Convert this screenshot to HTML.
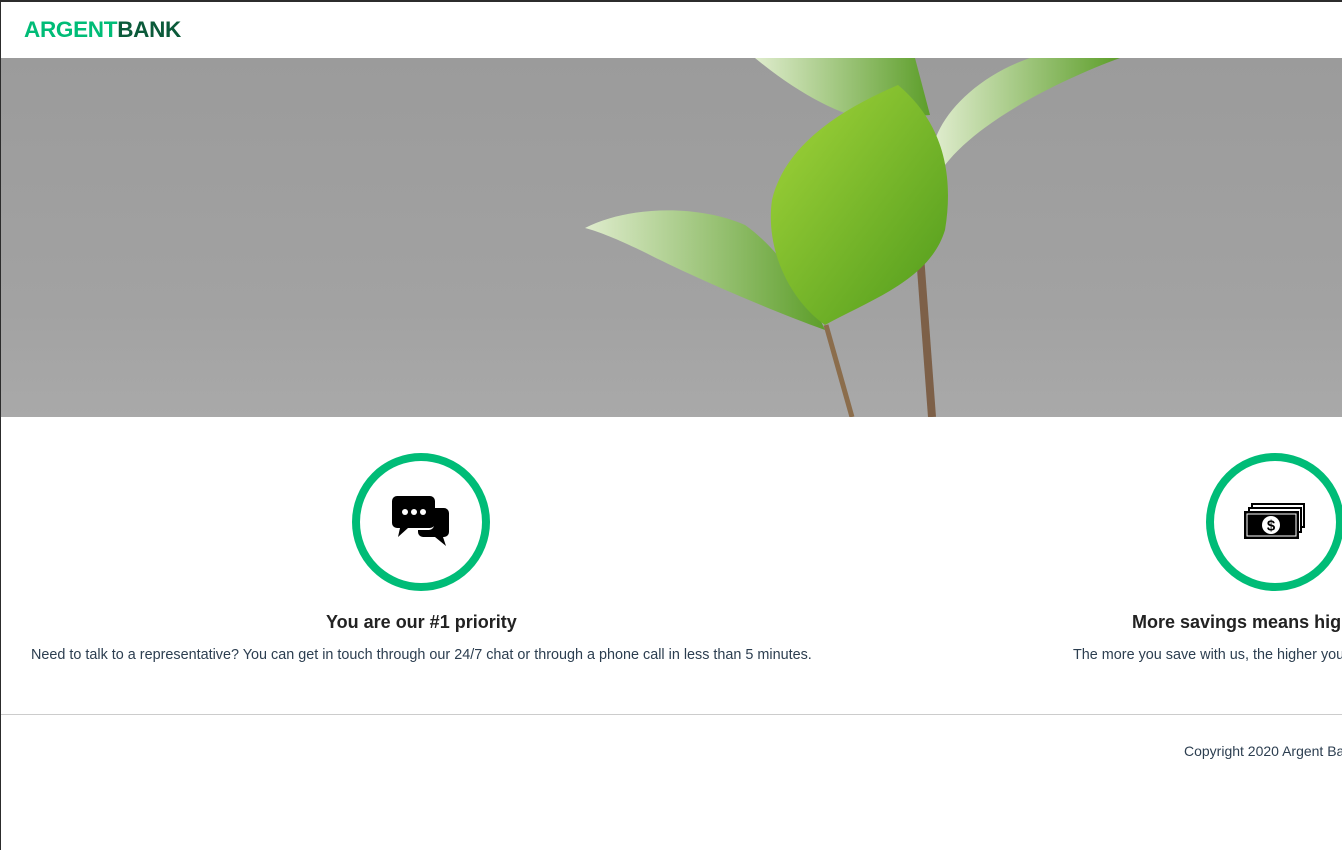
<!DOCTYPE html>
<html><head><meta charset="utf-8"><style>
*{margin:0;padding:0;box-sizing:border-box}
html,body{width:1342px;height:850px;overflow:hidden;background:#fff;font-family:"Liberation Sans",Arial,sans-serif;color:#2c3e50}
.wrap{position:absolute;left:0;top:0;width:1342px;height:850px;overflow:hidden}
.frame{position:absolute;left:0;top:0;width:1342px;height:850px;border-top:2px solid #2c2c2c;border-left:1px solid #2c2c2c}
.logo{position:absolute;left:24px;top:17px;font-size:22.5px;font-weight:bold;letter-spacing:-0.3px}
.logo .a{color:#00bc77}.logo .b{color:#0b5a3a}
.hero{position:absolute;left:1px;top:58px;width:1341px;height:359px;background:linear-gradient(#9b9b9b,#a2a2a2 70%,#a9a9a9)}
.circ{position:absolute;width:138px;height:138px;border:8px solid #00bc77;border-radius:50%;background:#fff}
h3{position:absolute;font-size:18px;font-weight:bold;color:#222;white-space:nowrap}
p{position:absolute;font-size:14.4px;color:#2c3e50;white-space:nowrap}
.line{position:absolute;left:1px;top:714px;width:1341px;height:1px;background:#ccc}
</style></head><body><div class="wrap">
<div class="frame"></div>
<div class="logo"><span class="a">ARGENT</span><span class="b">BANK</span></div>
<div class="hero">
<svg width="1341" height="359" viewBox="1 58 1341 359">
<defs>
<linearGradient id="g1" x1="0" y1="0" x2="1" y2="1"><stop offset="0" stop-color="#a4d63a"/><stop offset="1" stop-color="#4f9a1c"/></linearGradient>
<linearGradient id="g2" x1="0" y1="0" x2="1" y2="0"><stop offset="0" stop-color="#dfeccd"/><stop offset="1" stop-color="#5d9e2a"/></linearGradient>
</defs>
<path d="M852 417 L826 325" stroke="#8b6d4c" stroke-width="5" fill="none"/>
<path d="M932 417 L920 255" stroke="#7d6048" stroke-width="8" fill="none"/>
<path d="M755 58 C800 95 840 115 870 120 L930 115 L915 58 Z" fill="url(#g2)"/>
<path d="M945 165 C980 120 1060 80 1120 58 L1030 58 C980 75 945 110 935 140 Z" fill="url(#g2)"/>
<path d="M585 228 C630 205 700 205 745 225 C780 250 810 295 825 330 C770 310 700 280 650 255 C620 240 600 232 585 228 Z" fill="url(#g2)"/>
<path d="M898 85 C940 120 955 170 945 230 C930 280 870 300 825 325 C790 300 765 250 772 200 C785 145 840 110 898 85 Z" fill="url(#g1)"/>
</svg>
</div>
<div class="circ" style="left:352px;top:453px"></div>
<svg style="position:absolute;left:392px;top:496px" width="60" height="52" viewBox="0 0 60 52">
<path d="M42 12 h10 a5 5 0 0 1 5 5 v19 a5 5 0 0 1-5 5 h-1 l3 9 -11-9 h-12 a5 5 0 0 1-5-5 v-2 h11 a5 5 0 0 0 5-5z" fill="#000"/>
<path d="M5 0 h33 a5 5 0 0 1 5 5 v22 a5 5 0 0 1-5 5 h-22 l-10 9 2-9 h-3 a5 5 0 0 1-5-5 v-22 a5 5 0 0 1 5-5z" fill="#000"/>
<circle cx="13" cy="16" r="3" fill="#fff"/><circle cx="22" cy="16" r="3" fill="#fff"/><circle cx="31" cy="16" r="3" fill="#fff"/>
</svg>
<h3 style="left:326px;top:612px">You are our #1 priority</h3>
<p style="left:31px;top:647px">Need to talk to a representative? You can get in touch through our 24/7 chat or through a phone call in less than 5 minutes.</p>
<div class="circ" style="left:1206px;top:453px"></div>
<svg style="position:absolute;left:1243px;top:502px" width="63" height="38" viewBox="0 0 63 38">
<rect x="8" y="1" width="54" height="25" fill="#000"/><rect x="10" y="3" width="50" height="21" fill="#fff"/>
<rect x="5" y="5" width="54" height="26" fill="#000"/><rect x="7" y="7" width="50" height="22" fill="#fff"/>
<rect x="1" y="9" width="55" height="28" fill="#000"/><rect x="4" y="12" width="49" height="22" fill="none" stroke="#fff" stroke-width="1"/>
<circle cx="28" cy="23" r="9" fill="#fff"/>
<text x="28" y="28.5" font-family="Liberation Sans" font-weight="bold" font-size="15" text-anchor="middle" fill="#000">$</text>
</svg>
<h3 style="left:1132px;top:612px">More savings means higher rates</h3>
<p style="left:1073px;top:647px">The more you save with us, the higher your interest rate will be!</p>
<div class="line"></div>
<p style="left:1184px;top:743px;font-size:14px">Copyright 2020 Argent Bank</p>
</div></body></html>
